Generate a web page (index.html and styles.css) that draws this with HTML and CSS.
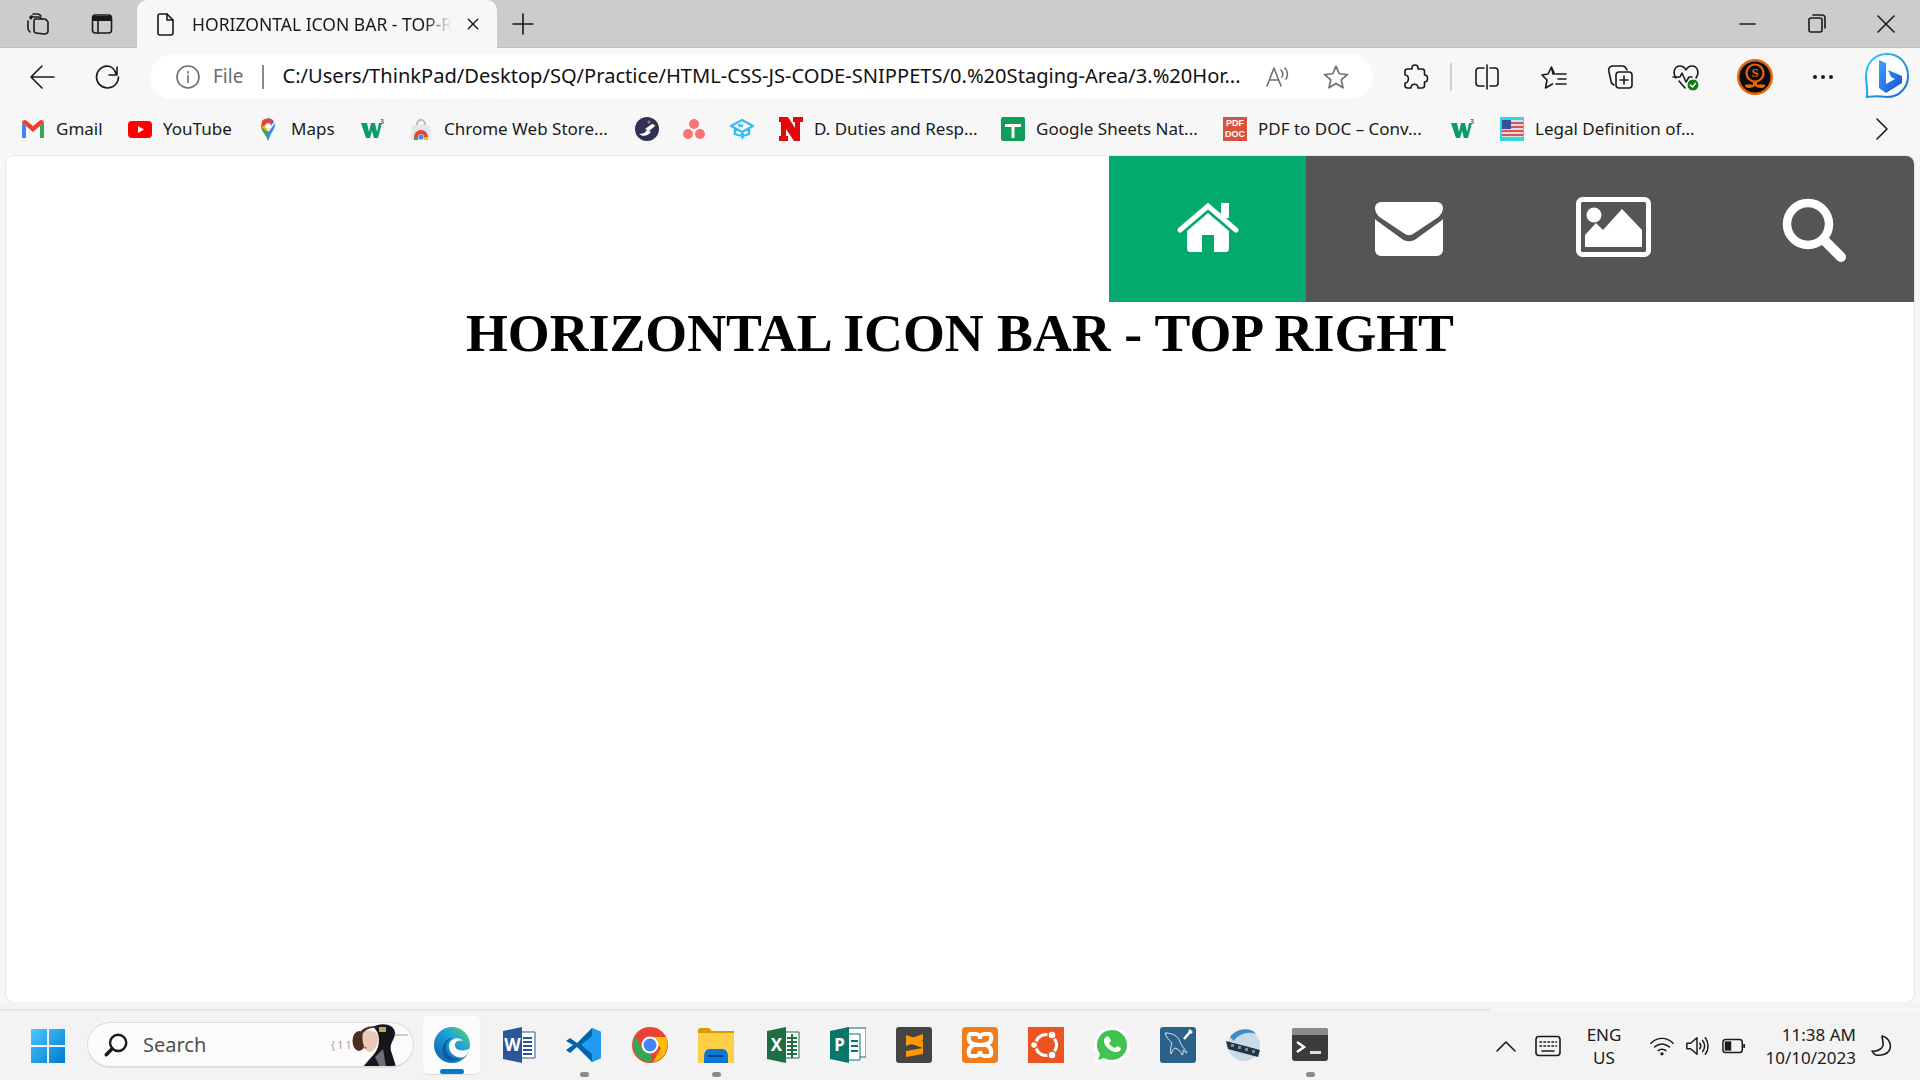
FILE: index.html
```html
<!DOCTYPE html>
<html lang="en">
<head>
<meta charset="utf-8">
<title>HORIZONTAL ICON BAR - TOP RIGHT</title>
<link rel="stylesheet" href="styles.css">
</head>
<body>
<div class="screen">
  <header class="tabstrip">
    <div class="cell"><svg class="ic" viewBox="0 0 24 24"><path d="M4 6c0-1 1-2 2-2M2 9v8c0 1 1 2 2 3M7 2h5c1 0 2 1 3 2M5 7c0-1 1-2 2-2h6c1 0 2 1 3 2"/><path d="M9 7h9c2 0 3 1 4 3v9c0 2-2 3-4 3l-8-1c-1 0-2-1-2-3V9c0-1 0-2 1-2Z"/></svg></div>
    <div class="cell"><svg class="ic" viewBox="0 0 24 24"><rect x="2.500" y="3" width="19" height="18" rx="3"/><path class="solid" d="M3 4h18v5H3Z"/><path d="M8 9v12"/></svg></div>
    <div class="tab">
      <svg class="ic tab-doc" viewBox="0 0 24 24"><path d="M5 4c0-1 1-2 2-2h7l6 6v13c0 1-1 2-2 2H7c-1 0-2-1-2-2Z"/><path d="M14 2v6h6"/></svg>
      <span class="tab-title">HORIZONTAL ICON BAR - TOP-RIGHT</span>
      <svg class="ic tab-x" viewBox="0 0 24 24"><path d="M5 5l14 14M19 5L5 19"/></svg>
    </div>
    <div class="cell"><svg class="ic" viewBox="0 0 24 24"><path d="M12 2v20M2 12h20"/></svg></div>
    <div></div>
    <div class="cell"><svg class="ic" viewBox="0 0 24 24"><path d="M5 12h15"/></svg></div>
    <div class="cell"><svg class="ic" viewBox="0 0 24 24"><rect x="4" y="6" width="13" height="14" rx="2"/><path d="M8 3h9c2 0 3 1 3 3v10"/></svg></div>
    <div class="cell"><svg class="ic" viewBox="0 0 24 24"><path d="M4 4l16 16M20 4L4 20"/></svg></div>
  </header>

  <nav class="toolbar">
    <div class="cell"><svg class="ic big" viewBox="0 0 28 28"><path d="M26 14H3M14 3L3 14l11 11"/></svg></div>
    <div class="cell"><svg class="ic big" viewBox="0 0 28 28"><path d="M23 4v8h-8M22.500 12C21 7 18 3 13 3A11 11 0 1 0 24.500 14"/></svg></div>
    <div class="address">
      <svg class="ic gray" viewBox="0 0 24 24"><circle cx="12" cy="12" r="11"/><path d="M12 10.500v7M12 6.500v1.500"/></svg>
      <span class="file">File</span>
      <span class="addr-sep"></span>
      <span class="url">C:/Users/ThinkPad/Desktop/SQ/Practice/HTML-CSS-JS-CODE-SNIPPETS/0.%20Staging-Area/3.%20Hor...</span>
      <svg class="ic gray read" viewBox="0 0 26 24"><path d="M2 21L9 3l7 18M4.500 15h9M16 5c2 2 2 5 1 7M20 3c3 3 3 8 1 11"/></svg>
      <svg class="ic gray star" viewBox="0 0 24 24"><path d="M12 2l3 7 7.500.7-5.700 5 1.700 7.300L12 18l-6.500 4 1.700-7.300-5.700-5L9 9Z"/></svg>
    </div>
    <div></div>
    <div class="cell"><svg class="ic big" viewBox="0 0 28 28"><path d="M11 5c0-4 6-4 6 0v1h4c1.500 0 2.500 1 2.500 2.500V12c4 0 4 7 0 7v3.500c0 1.500-1 2.500-2.500 2.500H17c0-5-7-5-7 0H6.500C5 25 4 24 4 22.500V20c4 0 5-8 0-8V8.500C4 7 5 6 6.500 6H11Z"/></svg></div>
    <div class="cell"><span class="tool-sep"></span></div>
    <div class="cell"><svg class="ic big" viewBox="0 0 28 28"><path d="M11 5H6C4 5 3 6 3 8v12c0 2 1 3 3 3h5M17 5h5c2 0 3 1 3 3v12c0 2-1 3-3 3h-5M14 2v24"/></svg></div>
    <div class="cell"><svg class="ic big" viewBox="0 0 28 28"><path d="M13 11L11.500 4 8 11l-6 1 5 5-1.500 8 7-4M11.500 4l3 7M16 11h10M18 16h8M16 21h10"/></svg></div>
    <div class="cell"><svg class="ic big" viewBox="0 0 28 28"><path d="M21 7c-1-2-2-4-4-4H6C3 4 2 6 3 9l2 9c0 2 1 3 3 4"/><rect x="10" y="9" width="16" height="16" rx="3"/><path d="M18 13v8M14 17h8"/></svg></div>
    <div class="cell heart"><svg class="ic big" viewBox="0 0 28 28"><path d="M4 15C0 9 3 3 8 3c3 0 5 2 6 4 1-2 3-4 6-4 5 0 8 6 4 12M1 14h7l2-4 4 9 3-5h3M7 18l6 7"/><circle class="ok" cx="21" cy="22" r="6"/><path class="tick" d="M18.500 22l2 2 3-3.500"/></svg></div>
    <div class="cell"><svg class="avatar" viewBox="0 0 36 36"><circle cx="18" cy="18" r="18" fill="#e8650c"/><circle cx="18" cy="18" r="15.500" fill="#0c0c0c"/><circle cx="18" cy="14" r="8.500" fill="none" stroke="#e8650c" stroke-width="2.200"/><text class="avatar-s" x="18" y="18">S</text><path fill="#e8650c" d="M16 22h4v4c3-1 6-1 8 0 1 1-1 3-4 3-2 0-5-1-6-2-1 1-4 2-6 2-3 0-5-2-4-3 2-1 5-1 8 0Z"/></svg></div>
    <div class="cell"><div class="dots"><i></i><i></i><i></i></div></div>
    <div class="cell"><svg class="bing" viewBox="0 0 46 50"><defs><linearGradient id="bg" x1="0" y1="0" x2="1" y2="1"><stop offset="0" stop-color="#37a5f8"/><stop offset="1" stop-color="#1b50d8"/></linearGradient><linearGradient id="bb" x1="0" y1="0" x2="1" y2="1"><stop offset="0" stop-color="#2fd0f5"/><stop offset="1" stop-color="#1464d8"/></linearGradient></defs><path class="bing-b" stroke="url(#bb)" d="M23 2C11 2 2 11 2 24c0 7 2 11 1 21 6-1 13-1 20 0 12 0 21-9 21-21C44 11 35 2 23 2Z"/><path fill="url(#bg)" d="M15 8l7 3v21l9-5-4-2-3-7 14 6v7L22 41l-7-5Z"/></svg></div>
  </nav>

  <div class="bookmarks">
    <a class="bm"><svg class="bi" viewBox="0 0 24 24"><path fill="#4285f4" d="M1 21V6l4 3v12Z"/><path fill="#34a853" d="M19 21V9l4-3v15Z"/><path fill="#ea4335" d="M1 6c0-3 3-4 5-2l6 5 6-5c2-2 5-1 5 2l-4 3-7 6-7-6Z"/></svg><span>Gmail</span></a>
    <a class="bm"><svg class="bi" viewBox="0 0 24 24"><rect y="4" width="24" height="17" rx="4" fill="#f00"/><path fill="#fff" d="M10 9l6 3.500-6 3.500Z"/></svg><span>YouTube</span></a>
    <a class="bm"><svg class="bi" viewBox="0 0 24 24"><path fill="#34a853" d="M12 24c-1-6-7-9-7-15l5 4 5 3Z"/><path fill="#fbbc04" d="M5 9l5-3 4 5-4 3Z"/><path fill="#4285f4" d="M12 1c2 0 5 1 6 4l-4 5-4-4Z"/><path fill="#ea4335" d="M6 4c2-3 8-4 12 1l-8 3-5 2Z"/><path fill="#4285f4" d="M19 6c1 6-5 10-7 18l-1-7 8-11Z"/><circle cx="12" cy="9" r="2.800" fill="#fff"/></svg><span>Maps</span></a>
    <a class="bm"><svg class="bi" viewBox="0 0 24 24"><path fill="#0b9e6c" d="M0 6h6l2 9 2-9h4l2 9 2-9h3l-4 15h-4l-2-7-2 7H5Z"/><text class="w3" x="19" y="7">3</text></svg></a>
    <a class="bm"><svg class="bi" viewBox="0 0 24 24"><path fill="#e7e7e7" d="M3 8h18l1 15H2Z"/><path fill="none" stroke="#bbb" stroke-width="2" d="M8 8c0-7 8-7 8 0"/><path fill="#ea4335" d="M5 20a7 7 0 0 1 14 0h-4a3 3 0 0 0-6 0Z"/><path fill="#fbbc04" d="M15 20h4v3h-4Z"/><path fill="#34a853" d="M5 20h4v3H5Z"/><circle cx="12" cy="20" r="2.500" fill="#4285f4"/></svg><span>Chrome Web Store...</span></a>
    <a class="bm"><svg class="bi" viewBox="0 0 24 24"><circle cx="12" cy="12" r="12" fill="#2c3350"/><path fill="#fff" d="M4 17c3 0 6-1 8-4l-2-1 7-5c2 0 3 1 3 2l-6 5 2 1c-3 4-8 5-12 2Z"/><circle cx="14" cy="5" r="1.500" fill="#e5673a"/></svg></a>
    <a class="bm"><svg class="bi" viewBox="0 0 24 24"><g fill="#fc7373"><circle cx="12" cy="7" r="5"/><circle cx="6" cy="17" r="5"/><circle cx="18" cy="17" r="5"/></g></svg></a>
    <a class="bm"><svg class="bi" viewBox="0 0 24 24"><path fill="none" stroke="#38bdf2" stroke-width="2.400" d="M12 3l11 6-11 6L1 9ZM5 12v5c4 2 10 2 14 0v-5M8 8l5 1"/><path fill="#38bdf2" d="M11 16h3v4l-1.500 3-1.500-3Z"/></svg></a>
    <a class="bm"><svg class="bi" viewBox="0 0 24 24"><path fill="#e2080c" d="M0 0h9l7 11V5h-2V0h10v5h-3v19h-6L7 12v7h2v5H0v-5h2V5H0Z"/></svg><span>D. Duties and Resp...</span></a>
    <a class="bm"><svg class="bi" viewBox="0 0 24 24"><rect width="24" height="24" rx="2" fill="#0f9d58"/><path fill="#fff" d="M4 7h16v3h-6.500v11h-3V10H4Z"/></svg><span>Google Sheets Nat...</span></a>
    <a class="bm"><div class="pdf"><span>PDF</span><span>DOC</span></div><span>PDF to DOC – Conv...</span></a>
    <a class="bm"><svg class="bi" viewBox="0 0 24 24"><path fill="#0b9e6c" d="M0 6h6l2 9 2-9h4l2 9 2-9h3l-4 15h-4l-2-7-2 7H5Z"/><text class="w3" x="19" y="7">3</text></svg></a>
    <a class="bm"><svg class="bi" viewBox="0 0 24 24"><rect width="24" height="24" fill="#27d8e6"/><path fill="#e8dada" d="M2 3h21v17H2Z"/><g fill="#d4545a"><path d="M11 5h12v2H11ZM11 9h12v2H11ZM2 13h21v2H2ZM2 17h21v2H2Z"/></g><path fill="#3a4f9a" d="M2 3h9v9H2Z"/></svg><span>Legal Definition of...</span></a>
    <div class="cell"><svg class="ic" viewBox="0 0 24 24"><path d="M7 2l10 10L7 22"/></svg></div>
  </div>

  <main class="viewport">
    <div class="iconbar">
      <a class="ib ib-active"><svg class="i-home" viewBox="0 0 62 51"><path class="w" d="M31 11l21 18v18c0 1.500-1 3-3 3H37V33H25v17H13c-2 0-3-1.500-3-3V29Z"/><path class="w" d="M44 1h8v15h-8Z"/><path class="wl" d="M3 28L31 4l28 24"/></svg></a>
      <a class="ib"><svg class="i-mail" viewBox="0 0 68 54"><path class="w" d="M6 0h56a6 6 0 0 1 6 6c0 4-3 8-6 10L38 32c-2 1.500-6 1.500-8 0L6 16C3 14 0 10 0 6a6 6 0 0 1 6-6Z"/><path class="w" d="M0 17c1 1 3 3 5 4l22 16c4 3 10 3 14 0l22-16c2-1 4-3 5-4v31a6 6 0 0 1-6 6H6a6 6 0 0 1-6-6Z"/></svg></a>
      <a class="ib"><svg class="i-img" viewBox="0 0 75 60"><rect class="wl" x="2.500" y="2.500" width="70" height="55" rx="4"/><circle class="w" cx="18" cy="18" r="7.500"/><path class="w" d="M9 50V38l11-12 7 7 19-21 20 21v17Z"/></svg></a>
      <a class="ib"><svg class="i-search" viewBox="0 0 65 65"><circle class="wl fat" cx="26" cy="26" r="21"/><path class="wl fat2" d="M42 42l17 17"/></svg></a>
    </div>
    <h1 class="title">HORIZONTAL ICON BAR - TOP RIGHT</h1>
  </main>

  <div class="gap"></div>
  <div class="taskline"></div>
  <footer class="taskbar">
    <div class="cell start"><svg class="t" viewBox="0 0 36 36"><defs><linearGradient id="win" x1="0" y1="0" x2="1" y2="1"><stop offset="0" stop-color="#4cc8fa"/><stop offset="1" stop-color="#0078d4"/></linearGradient></defs><path fill="url(#win)" d="M1 1h16v16H1ZM19 1h16v16H19ZM1 19h16v16H1ZM19 19h16v16H19Z"/></svg></div>
    <div class="search">
      <svg class="ic s-ic" viewBox="0 0 24 24"><circle cx="14" cy="10" r="7.500"/><path class="heavy" d="M8.500 15.500L3 21"/></svg>
      <span class="s-text">Search</span>
      <span class="s-math">{ 1 1</span>
      <svg class="ada" viewBox="0 0 60 44"><ellipse cx="8" cy="18" rx="6.500" ry="10" fill="#4a2f20"/><path fill="#15151c" d="M22 4C30-1 44 1 44 10c0 7-6 10-4 18 2 6 4 12 5 16H12c6-8 12-12 15-20 2-8 1-15-5-20Z"/><path fill="#6b6f78" d="M24 34l8-8 3 18h-6Z"/><path fill="#ecc8b8" d="M12 9c5-3 14-2 15 5 1 6-3 14-8 15-5 1-9-10-7-20Z"/><path fill="#4a2f20" d="M8 11c3-7 14-10 20-6-6-1-12 0-16 5Z"/><path fill="#c9a14a" d="M28 4h7v5h-7Z"/><path fill="#d0504a" d="M12.500 24h3v1.500h-3Z"/><path stroke="#999" d="M44 12h13"/></svg>
    </div>
    <div class="tasks">
      <div class="task current"><svg class="t" viewBox="0 0 36 36"><defs><linearGradient id="ed" x1="0" y1="1" x2="1" y2="0"><stop offset="0" stop-color="#0c59a4"/><stop offset=".6" stop-color="#1fa3dd"/><stop offset="1" stop-color="#5fd45a"/></linearGradient></defs><circle cx="18" cy="18" r="18" fill="url(#ed)"/><path fill="#fbfbfb" d="M36 21c-3 3-14 4-15-2-1-3 3-7 8-5-4-5-13-3-14 4-1 8 7 14 15 12 3-2 5-5 6-9Z"/><path fill="#0c59a4" d="M9 28c-2-9 2-17 10-17-6 2-9 8-6 14 2 5 8 8 14 6-7 5-15 3-18-3Z"/></svg><i class="run active"></i></div>
      <div class="task"><svg class="t" viewBox="0 0 36 36"><path fill="#fff" stroke="#2b579a" d="M14 5h21v26H14Z"/><path stroke="#2b579a" stroke-width="2" d="M23 11h9M23 15h9M23 19h9M23 23h9M23 27h9"/><path fill="#2b579a" d="M3 4l19-4v36L3 32Z"/><text class="tl" x="12.500" y="24">W</text></svg></div>
      <div class="task"><svg class="t" viewBox="0 0 36 36"><path fill="#0065a9" d="M26 1L11 16 4 11 0 14l7 4-7 5 4 3 7-6 15 15 9-4V5Z"/><path fill="#1f9cf0" d="M26 1l9 4v26l-9 4V9L15 18 26 27Z"/></svg><i class="run"></i></div>
      <div class="task"><svg class="t" viewBox="0 0 36 36"><circle cx="18" cy="18" r="18" fill="#ea4335"/><path fill="#fbbc04" d="M18 10h16a18 18 0 0 1-13 25l8-14Z"/><path fill="#34a853" d="M3 9l8 14 7 3 3 9A18 18 0 0 1 3 9Z"/><circle cx="18" cy="18" r="8.500" fill="#fff"/><circle cx="18" cy="18" r="6.500" fill="#4285f4"/></svg></div>
      <div class="task"><svg class="t" viewBox="0 0 36 36"><path fill="#d99c00" d="M0 3c0-1 1-2 2-2h9l3 3h22v6H0Z"/><path fill="#ffcf48" d="M0 6h36v30H0Z"/><path fill="#0a78d4" d="M6 36v-6c0-5 2-8 6-8h12c4 0 6 3 6 8v6Z"/><path fill="#063f8a" d="M10 28h16v2H10Z"/></svg><i class="run"></i></div>
      <div class="task"><svg class="t" viewBox="0 0 36 36"><path fill="#fff" stroke="#1d6f42" d="M14 5h21v26H14Z"/><path stroke="#1d6f42" stroke-width="2" d="M23 11h10M23 15h10M23 19h10M23 23h10M23 27h10M28 7v24"/><path fill="#1d6f42" d="M3 4l19-4v36L3 32Z"/><text class="tl" x="12.500" y="24">X</text></svg></div>
      <div class="task"><svg class="t" viewBox="0 0 36 36"><path fill="#fff" stroke="#077568" d="M16 1h20v29H16Z"/><path fill="#fff" stroke="#077568" d="M14 7h16v26H14Z"/><path stroke="#077568" stroke-width="2" d="M21 14h7M21 19h7M21 24h7"/><path fill="#077568" d="M0 4l19-4v36L0 32Z"/><text class="tl" x="9.500" y="24">P</text></svg></div>
      <div class="task"><svg class="t" viewBox="0 0 36 36"><rect width="36" height="36" rx="3" fill="#444"/><path fill="#ff9800" d="M27 7L10 13v6l17-6ZM10 15l17 6v-7l-17-6ZM27 21v6l-17 3v-6Z"/></svg></div>
      <div class="task"><svg class="t" viewBox="0 0 36 36"><rect width="36" height="36" rx="4" fill="#ed7d1f"/><path fill="none" stroke="#fff" stroke-width="4" d="M9 7h5c3 0 4 3 4 5 0-2 1-5 4-5h5c3 0 3 7 0 9-2 1-3 2-9 2-6 0-7-1-9-2-3-2-3-9 0-9ZM9 29h5c3 0 4-3 4-5 0 2 1 5 4 5h5c3 0 3-7 0-9l-2-2H11l-2 2c-3 2-3 9 0 9Z"/></svg></div>
      <div class="task"><svg class="t" viewBox="0 0 36 36"><rect width="36" height="36" fill="#e95420"/><circle cx="18" cy="18" r="10.500" fill="none" stroke="#fff" stroke-width="3"/><circle cx="6" cy="18" r="3.500" fill="#fff" stroke="#e95420" stroke-width="1.500"/><circle cx="24" cy="8" r="4" fill="#fff" stroke="#e95420" stroke-width="1.500"/><circle cx="24" cy="28" r="4" fill="#fff" stroke="#e95420" stroke-width="1.500"/></svg></div>
      <div class="task"><svg class="t" viewBox="0 0 36 36"><path fill="#fff" d="M18 0a18 18 0 0 1 0 36c-3 0-6-1-9-2l-9 2 3-8A18 18 0 0 1 18 0Z"/><path fill="#40c351" d="M18 3a15 15 0 0 1 0 30c-3 0-6-1-8-2l-6 2 2-6A15 15 0 0 1 18 3Z"/><path fill="#fff" d="M12 10c1-1 2-1 3 0l2 4-2 2c1 2 3 4 6 5l2-2 4 2c0 2-1 3-4 4-6 1-14-7-13-12 0-1 1-2 2-3Z"/></svg></div>
      <div class="task"><svg class="t" viewBox="0 0 36 36"><rect width="36" height="36" rx="3" fill="#2a6289"/><path fill="none" stroke="#dbe6ee" d="M5 6c8 0 13 3 15 9 2 5 5 7 7 11-2-1-3-2-4-3 0 2 1 4-1 5-1-4-4-6-7-7-2 1-3 4-4 6-1-4 0-8 1-11C9 13 6 10 5 6Z"/><path stroke="#fff" stroke-width="2.500" d="M24 12l6-7M29 3l3 3"/></svg></div>
      <div class="task"><svg class="t" viewBox="0 0 36 36"><circle cx="18" cy="18" r="16" fill="#c8dbe8"/><path fill="#3d8bc7" d="M4 10c6-8 20-11 26-3-8-3-18 0-22 7Z"/><path fill="#26323d" d="M0 14l34 9-2 7L2 22Z"/><path fill="#7d8da0" d="M5 17h3v3H5ZM12 19h3v3h-3ZM19 21h3v3h-3ZM26 23h3v3h-3Z"/></svg></div>
      <div class="task"><svg class="t" viewBox="0 0 36 36"><rect y="1" width="36" height="33" rx="3" fill="#3b3b3b"/><path fill="#8a8a8a" d="M3 1h30a3 3 0 0 1 3 3v4H0V4a3 3 0 0 1 3-3Z"/><path fill="none" stroke="#fff" stroke-width="2.500" d="M5 15l7 5-7 5"/><path fill="#ddd" d="M18 24h11v3H18Z"/></svg><i class="run"></i></div>
    </div>
    <div class="tray">
      <div class="cell"><svg class="ic" viewBox="0 0 24 24"><path d="M3 17l9-9 9 9"/></svg></div>
      <div class="cell"><svg class="ic kb" viewBox="0 0 26 22"><rect x="1" y="1.500" width="24" height="19" rx="3"/><path d="M5 7h1.500M9 7h1.500M13 7h1.500M17 7h1.500M21 7h.5M5 11h1.500M9 11h1.500M13 11h1.500M17 11h1.500M21 11h.5M7 16h12"/></svg></div>
      <div class="lang"><span>ENG</span><span>US</span></div>
      <div class="cell"><svg class="ic" viewBox="0 0 26 22"><path d="M1 8c7-7 17-7 24 0M5 12c5-4 11-4 16 0M9 16c2-2 6-2 8 0"/><circle class="dot" cx="13" cy="19.500" r="1.800"/></svg></div>
      <div class="cell"><svg class="ic" viewBox="0 0 26 24"><path d="M2 9v6h4l7 6V3L6 9ZM16 9c1.500 2 1.500 4 0 6M19 6c3 4 3 8 0 12M22 3c4 5 4 13 0 18"/></svg></div>
      <div class="cell"><svg class="ic" viewBox="0 0 26 18"><rect x="1" y="2" width="21" height="14" rx="3"/><path class="solid" d="M3 4h7v10H3Z"/><path class="solid" d="M23 7h2v4h-2Z"/></svg></div>
      <div class="clock"><span>11:38 AM</span><span>10/10/2023</span></div>
      <div class="cell"><svg class="ic" viewBox="0 0 24 24"><path d="M12 2c8 2 10 10 7 15-2 3-8 5-13 4-2-1-3-2-4-4 6 1 12-3 11-8 0-3-1-5-1-7Z"/></svg></div>
    </div>
  </footer>
</div>
</body>
</html>
```

FILE: styles.css
```css
* { box-sizing: border-box; }
html, body { margin: 0; padding: 0; }
body { font-family: "Noto Sans", "Open Sans", sans-serif; color: #1a1a1a; }
a { color: inherit; text-decoration: none; }

.screen { width: 1920px; height: 1080px; overflow: hidden; display: flex; flex-direction: column; background: #f7f7f7; }
.cell { display: flex; align-items: center; justify-content: center; }

.ic { width: 24px; height: 24px; fill: none; stroke: #1a1a1a; stroke-width: 1.600; stroke-linecap: round; stroke-linejoin: round; flex: none; }
.ic.big { width: 28px; height: 28px; }
.ic .solid { fill: #1a1a1a; stroke: none; }
.ic .dot { fill: #1a1a1a; stroke: none; }
.ic.gray { stroke: #707070; }

.tabstrip { height: 48px; flex: none; background: #cccccc; padding-left: 6px; display: grid; grid-template-columns: 64px 64px 363px 52px 1fr 70px 70px 68px; border-bottom: 1px solid #bdbdbd; }
.tab { margin-left: 3px; height: 48px; background: #f7f7f7; border-radius: 10px 10px 0 0; display: flex; align-items: center; padding-left: 16px; }
.tab-doc { width: 24px; height: 26px; }
.tab-title { margin-left: 15px; width: 259px; flex: none; overflow: hidden; white-space: nowrap; font-size: 17.500px; -webkit-mask-image: linear-gradient(90deg, #000 90%, transparent); mask-image: linear-gradient(90deg, #000 90%, transparent); }
.tab-x { width: 16px; height: 16px; margin-left: 14px; stroke-width: 2.200; }

.toolbar { height: 60px; flex: none; padding: 6px 5px 9px 12px; display: grid; grid-template-rows: 45px; grid-template-columns: 60px 72px 1229px 12px 60px 12px 60px 74px 58px 74px 64px 72px 56px; }
.address { margin-left: 6px; height: 45px; background: #fff; border-radius: 23px; display: flex; align-items: center; padding-left: 26px; }
.file { margin-left: 13px; font-size: 19px; color: #6a6a6a; width: 33px; margin-top: -2px; }
.addr-sep { margin-left: 16px; width: 1.500px; height: 24px; background: #8a8a8a; }
.url { margin-left: 19px; width: 961px; flex: none; white-space: nowrap; font-size: 20.100px; color: #111; margin-top: -2px; }
.read { margin-left: 21px; width: 26px; }
.star { margin-left: 32px; width: 26px; height: 26px; }
.tool-sep { width: 2px; height: 28px; background: #cfcfcf; }
.heart .ok { fill: #107c10; stroke: #f7f7f7; stroke-width: 1; }
.heart .tick { stroke: #fff; stroke-width: 1.500; }
.avatar { width: 36px; height: 36px; }
.avatar-s { fill: #e8650c; font-family: "Liberation Serif", serif; font-weight: 700; font-size: 13px; text-anchor: middle; }
.dots { display: flex; gap: 4px; }
.dots i { width: 4px; height: 4px; border-radius: 50%; background: #1a1a1a; }
.bing { width: 46px; height: 50px; flex: none; }
.bing-b { fill: #fff; stroke-width: 2; }

.bookmarks { height: 48px; flex: none; padding: 0 0 7px 21px; display: grid; grid-template-columns: 107px 128px 105px 48px 226px 47px 48px 49px 222px 222px 228px 49px 362px 40px; align-items: center; font-size: 17px; }
.bm { display: flex; align-items: center; gap: 11px; white-space: nowrap; }
.bi { width: 24px; height: 24px; flex: none; }
.w3 { font-size: 7px; font-weight: 700; fill: #0b9e6c; font-family: "Noto Sans", sans-serif; }
.pdf { width: 24px; height: 24px; flex: none; background: #d9523e; color: #fff; display: flex; flex-direction: column; align-items: center; justify-content: center; font-family: "Liberation Sans", sans-serif; font-size: 9px; font-weight: 700; line-height: 11px; }

.viewport { height: 846px; flex: none; margin: 0 6px; background: #fff; border-radius: 8px; overflow: hidden; box-shadow: 0 0 0 1px #e6e6e6; display: flex; flex-direction: column; }
.iconbar { margin-left: auto; height: 146px; display: grid; grid-template-columns: 197px 205px 204px 199px; background: #555555; flex: none; }
.ib { display: flex; align-items: center; justify-content: center; }
.ib-active { background: #04aa6d; }
.w { fill: #fff; }
.wl { fill: none; stroke: #fff; stroke-width: 5; stroke-linecap: round; }
.wl.fat { stroke-width: 8.500; }
.wl.fat2 { stroke-width: 10; }
.i-home { width: 62px; height: 51px; margin-top: -4px; }
.i-mail { width: 68px; height: 54px; }
.i-img { width: 75px; height: 60px; margin-top: -4px; }
.i-search { width: 65px; height: 65px; margin-top: 2px; }
.title { margin: 0; text-align: center; font-family: "Liberation Serif", serif; font-weight: 700; font-size: 53.800px; line-height: 62px; color: #000; }

.gap { height: 7px; flex: none; background: #f3f3f3; }
.taskline { height: 2px; width: 1490px; flex: none; background: #e6e6e6; }
.taskbar { flex: 1; background: #f3f3f3; display: grid; grid-template-columns: 87px 336px 1062px 1fr; align-items: center; }
.t { width: 36px; height: 36px; flex: none; }
.start .t { margin-left: 9px; }
.search { height: 46px; margin-top: -1px; width: 327px; border-radius: 23px; background: #fbfbfb; border: 1.500px solid #dcdcdc; border-bottom-width: 2px; display: flex; align-items: center; padding-left: 15px; overflow: hidden; }
.s-ic { width: 26px; height: 26px; stroke-width: 2.200; }
.s-ic .heavy { stroke-width: 3.200; }
.s-text { margin-left: 14px; font-size: 20px; color: #505050; width: 188px; }
.s-math { font-size: 10px; color: #999; white-space: nowrap; width: 20px; flex: none; }
.ada { width: 60px; height: 44px; flex: none; }
.tasks { display: flex; align-items: stretch; height: 60px; margin-left: -4px; }
.task { position: relative; width: 66px; display: flex; align-items: center; justify-content: center; }
.task.current::before { content: ""; position: absolute; left: 4px; right: 5px; top: 0; bottom: 2px; background: #fbfbfb; border-radius: 5px; box-shadow: 0 1px 1px #dcdcdc; }
.task .t { position: relative; margin-top: -1px; }
.tl { fill: #fff; font-family: "Noto Sans", sans-serif; font-weight: 700; font-size: 17px; text-anchor: middle; }
.run { position: absolute; left: 50%; bottom: -1px; width: 9px; height: 5px; margin-left: -4px; border-radius: 3px; background: #8a8a8a; }
.run.active { width: 24px; margin-left: -12px; background: #0078d4; bottom: 2px; }

.tray { display: grid; grid-template-columns: 42px 42px 70px 46px 24px 50px 97px 52px; height: 60px; align-items: center; font-size: 17px; }
.kb { width: 26px; height: 22px; }
.lang, .clock { display: flex; flex-direction: column; line-height: 23px; }
.lang { align-items: center; }
.clock { align-items: flex-end; white-space: nowrap; }
```
